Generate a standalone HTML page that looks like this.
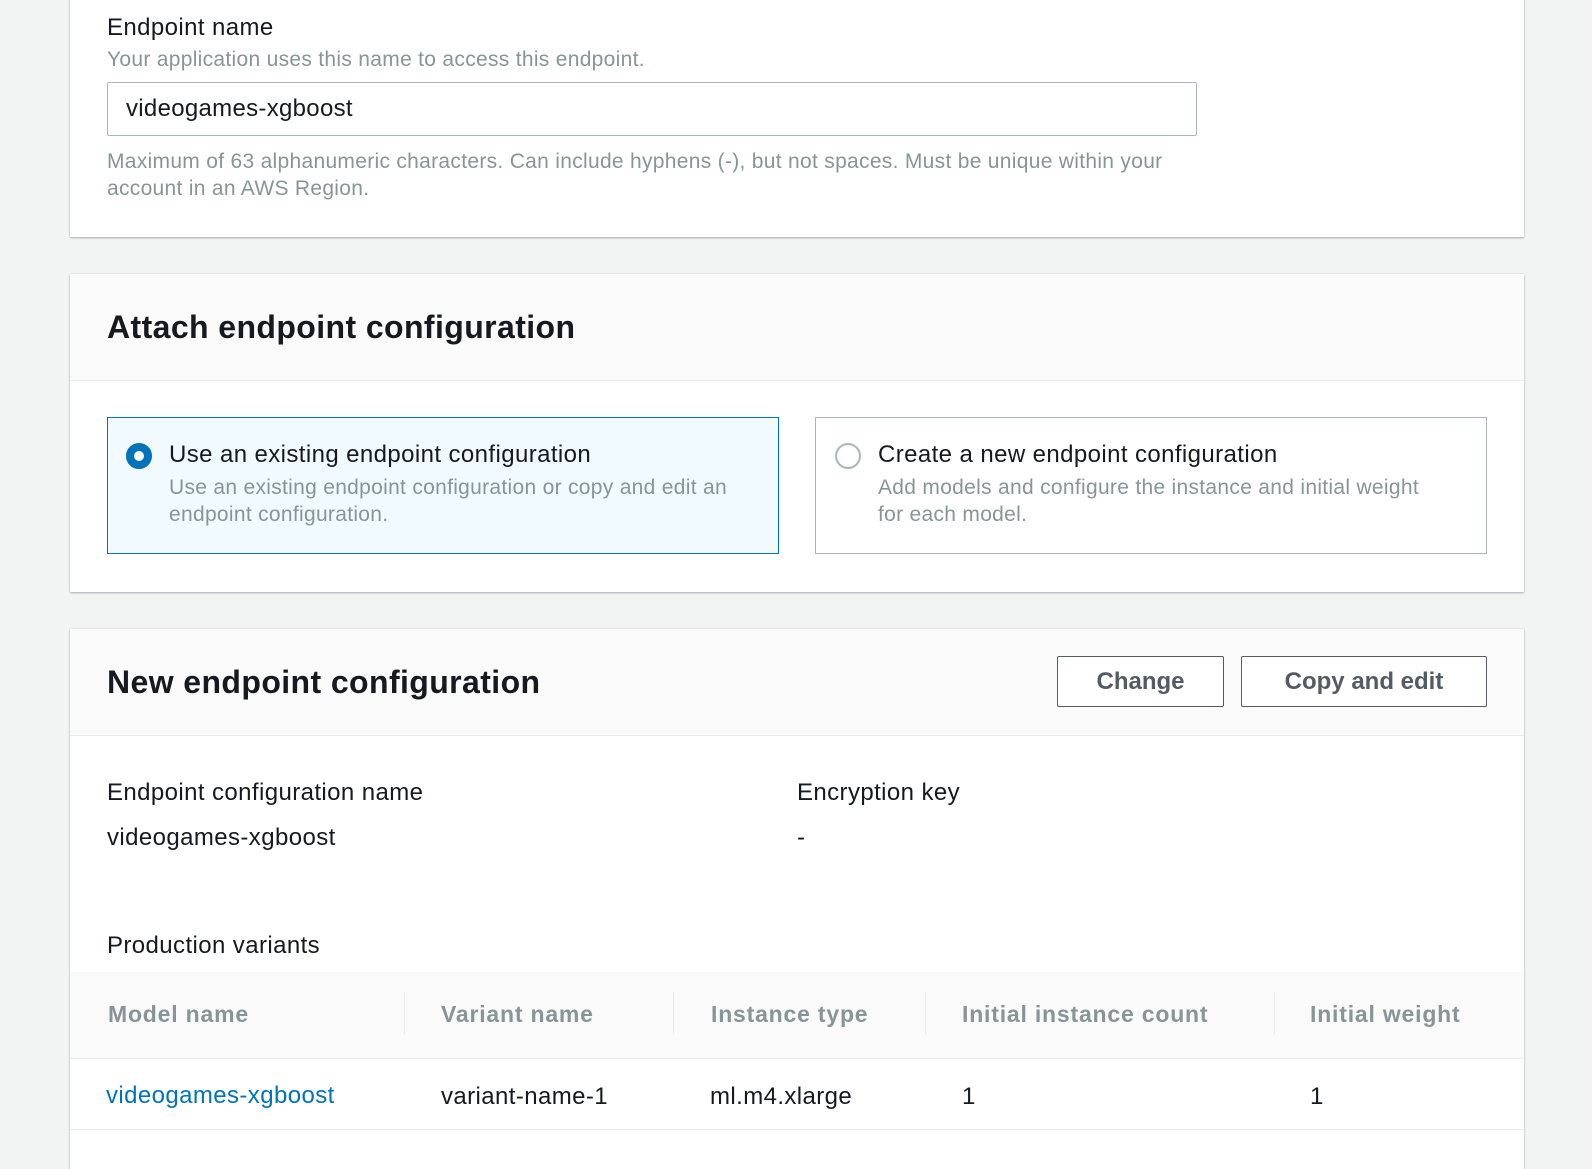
<!DOCTYPE html>
<html><head><style>
*{margin:0;padding:0;box-sizing:border-box}
body{width:1592px;height:1136px;background:#f2f3f3;font-family:"Liberation Sans",sans-serif;position:relative;overflow:hidden;color:#16191f}
.card{position:absolute;left:70px;width:1454px;background:#fff;box-shadow:0 1px 2px rgba(0,31,63,.3),0 0 1px rgba(0,0,0,.15)}
.abs{position:absolute;white-space:nowrap}
.hdr{position:absolute;left:0;right:0;top:0;background:#fafafa;border-bottom:1px solid #eaeded}
.h2{font-size:32px;font-weight:bold;color:#16191f;letter-spacing:.4px}
.lbl{font-size:24px;color:#16191f;letter-spacing:.4px}
.sub{font-size:21px;color:#879596;letter-spacing:.3px}
.btn{position:absolute;height:51px;border:1px solid #545b64;border-radius:2px;background:#fff;font-weight:bold;font-size:24px;color:#545b64;text-align:center;line-height:49px}
.th{font-size:23px;font-weight:bold;color:#879596;letter-spacing:.8px}
.div{position:absolute;top:20px;width:1px;height:42px;background:#eaeded}
</style></head><body>

<div class="card" style="top:-10px;height:247px">
  <div class="abs lbl" style="left:37px;top:24px">Endpoint name</div>
  <div class="abs sub" style="left:37px;top:58px">Your application uses this name to access this endpoint.</div>
  <div class="abs" style="left:37px;top:92px;width:1090px;height:54px;border:1px solid #aab7b8;border-radius:2px;font-size:24px;line-height:52px;padding-left:18px;letter-spacing:.3px">videogames-xgboost</div>
  <div class="abs sub" style="left:37px;top:158px;line-height:27px;white-space:normal;width:1090px">Maximum of 63 alphanumeric characters. Can include hyphens (-), but not spaces. Must be unique within your account in an AWS Region.</div>
</div>

<div class="card" style="top:274px;height:318px">
  <div class="hdr" style="height:107px"></div>
  <div class="abs h2" style="left:37px;top:35px">Attach endpoint configuration</div>
  <div class="abs" style="left:37px;top:143px;width:672px;height:137px;border:1px solid #0073bb;background:#f1faff"></div>
  <div class="abs" style="left:56px;top:169px;width:26px;height:26px;border-radius:50%;border:8px solid #0073bb;background:#fff"></div>
  <div class="abs lbl" style="left:99px;top:167px">Use an existing endpoint configuration</div>
  <div class="abs sub" style="left:99px;top:200px;line-height:27px">Use an existing endpoint configuration or copy and edit an<br>endpoint configuration.</div>
  <div class="abs" style="left:745px;top:143px;width:672px;height:137px;border:1px solid #aab7b8"></div>
  <div class="abs" style="left:765px;top:169px;width:26px;height:26px;border-radius:50%;border:2px solid #aab7b8;background:#fff"></div>
  <div class="abs lbl" style="left:808px;top:167px">Create a new endpoint configuration</div>
  <div class="abs sub" style="left:808px;top:200px;line-height:27px">Add models and configure the instance and initial weight<br>for each model.</div>
</div>

<div class="card" style="top:629px;height:540px">
  <div class="hdr" style="height:107px"></div>
  <div class="abs h2" style="left:37px;top:35px">New endpoint configuration</div>
  <div class="btn" style="left:987px;top:27px;width:167px">Change</div>
  <div class="btn" style="left:1171px;top:27px;width:246px">Copy and edit</div>
  <div class="abs lbl" style="left:37px;top:150px">Endpoint configuration name</div>
  <div class="abs lbl" style="left:37px;top:195px">videogames-xgboost</div>
  <div class="abs lbl" style="left:727px;top:150px">Encryption key</div>
  <div class="abs lbl" style="left:727px;top:195px">-</div>
  <div class="abs lbl" style="left:37px;top:303px">Production variants</div>
  <div class="abs" style="left:0;right:0;top:343px;height:87px;background:#fafafa;border-bottom:1px solid #eaeded">
    <div class="abs th" style="left:38px;top:29px">Model name</div>
    <div class="div" style="left:334px"></div>
    <div class="abs th" style="left:371px;top:29px">Variant name</div>
    <div class="div" style="left:603px"></div>
    <div class="abs th" style="left:641px;top:29px">Instance type</div>
    <div class="div" style="left:855px"></div>
    <div class="abs th" style="left:892px;top:29px">Initial instance count</div>
    <div class="div" style="left:1204px"></div>
    <div class="abs th" style="left:1240px;top:29px">Initial weight</div>
  </div>
  <div class="abs lbl" style="left:36px;top:453px;color:#0073bb">videogames-xgboost</div>
  <div class="abs lbl" style="left:371px;top:454px">variant-name-1</div>
  <div class="abs lbl" style="left:640px;top:454px">ml.m4.xlarge</div>
  <div class="abs lbl" style="left:892px;top:454px">1</div>
  <div class="abs lbl" style="left:1240px;top:454px">1</div>
  <div class="abs" style="left:0;right:0;top:500px;height:1px;background:#eaeded"></div>
</div>
</body></html>
